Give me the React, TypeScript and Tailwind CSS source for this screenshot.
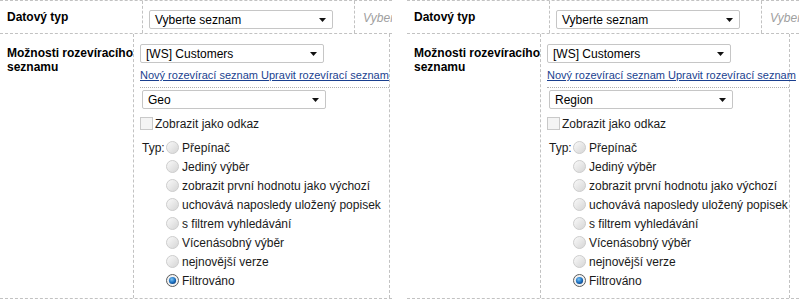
import React from "react";

const font = { fontFamily: '"Liberation Sans", Arial, sans-serif' };

const options = [
  "Přepínač",
  "Jediný výběr",
  "zobrazit první hodnotu jako výchozí",
  "uchovává naposledy uložený popisek",
  "s filtrem vyhledávání",
  "Vícenásobný výběr",
  "nejnovější verze",
  "Filtrováno",
];

function Select({ text, className = "" }: { text: string; className?: string }) {
  return (
    <div
      className={`flex h-[19px] w-[184px] items-center justify-between rounded-[2px] border border-[#c6c6c6] bg-white pl-[5px] pr-[5px] text-[12px] text-black ${className}`}
    >
      <span className="leading-none">{text}</span>
      <svg width="7" height="4" viewBox="0 0 7 4" className="mr-[1px]">
        <path d="M0 0h7L3.5 4z" fill="#111" />
      </svg>
    </div>
  );
}

function Radio({ checked }: { checked?: boolean }) {
  if (checked) {
    return (
      <svg width="13" height="13" viewBox="0 0 13 13" className="shrink-0">
        <defs>
          <radialGradient id="rb-on" cx="40%" cy="35%" r="70%">
            <stop offset="0%" stopColor="#7cc4f5" />
            <stop offset="60%" stopColor="#1f74c4" />
            <stop offset="100%" stopColor="#0b3f80" />
          </radialGradient>
        </defs>
        <circle cx="6.5" cy="6.5" r="6" fill="#f2f2f2" stroke="#5b5b5b" />
        <circle cx="6.5" cy="6.5" r="3.6" fill="url(#rb-on)" />
      </svg>
    );
  }
  return (
    <svg width="13" height="13" viewBox="0 0 13 13" className="shrink-0">
      <defs>
        <linearGradient id="rb-off" x1="0" y1="0" x2="1" y2="1">
          <stop offset="0%" stopColor="#fbfbfb" />
          <stop offset="100%" stopColor="#d4d4d4" />
        </linearGradient>
      </defs>
      <circle cx="6.5" cy="6.5" r="6" fill="url(#rb-off)" stroke="#cdcdcd" />
    </svg>
  );
}

function Panel({ value, narrow }: { value: string; narrow?: boolean }) {
  return (
    <div className="text-black">
      {/* row: data type */}
      <div className="flex h-[34px] border-y border-dashed border-[#c2c2c2]">
        <div className="flex w-[143px] shrink-0 items-center border-r border-dashed border-[#c2c2c2] pl-[7px] text-[12px] font-bold">
          Datový typ
        </div>
        <div className="w-[212px] shrink-0 border-r border-dashed border-[#c2c2c2] pl-[6px] pt-[9px]">
          <Select text="Vyberte seznam" />
        </div>
        <div className="flex min-w-0 flex-1 items-center overflow-hidden whitespace-nowrap pl-[8px] pt-[1px] text-[12px] italic text-[#a0a0a0]">
          Vyberte seznam
        </div>
      </div>

      {/* row: dropdown options */}
      <div className="flex h-[265px] border-b border-dashed border-[#c2c2c2]">
        <div className="w-[134px] shrink-0 whitespace-nowrap border-r border-dashed border-[#c2c2c2] pl-[7px] pt-[12px] text-[12px] font-bold leading-[14px]">
          Možnosti rozevíracího
          <br />
          seznamu
        </div>
        <div
          className={`${narrow ? "w-[249px]" : "w-[256px]"} shrink-0 border-r border-dashed border-[#c2c2c2] pl-[6px] pt-[10px]`}
        >
          <Select text="[WS] Customers" />
          <div className="mt-[5px] whitespace-nowrap text-[11px] leading-[14px] text-[#1a3f8f] underline">
            <a>Nový rozevírací seznam</a> <a>Upravit rozevírací seznam</a>
          </div>
          <div className="mt-[5px] border-t border-dotted border-[#b0b0b0]" />
          <Select text={value} className="ml-[2px] mt-[2px]" />
          <div className="mt-[8px] flex h-[13px] items-center text-[12px] text-[#1a1a1a]">
            <div className="h-[13px] w-[13px] border border-[#c9c9c9] bg-[#f4f4f4]" />
            <span className="ml-[2px]">Zobrazit jako odkaz</span>
          </div>
          <div className="mt-[8px] flex text-[12px] text-[#1a1a1a]">
            <div className="flex h-[19px] w-[26px] shrink-0 items-center pl-[2px]">Typ:</div>
            <div className="flex flex-col">
              {options.map((o, i) => (
                <div key={o} className="flex h-[19px] items-center whitespace-nowrap">
                  <Radio checked={i === options.length - 1} />
                  <span className="ml-[3px]">{o}</span>
                </div>
              ))}
            </div>
          </div>
        </div>
      </div>
    </div>
  );
}

export default function App() {
  return (
    <div className="flex h-[300px] w-[799px] overflow-hidden bg-white" style={font}>
      <div className="w-[392px] shrink-0 overflow-hidden">
        <Panel value="Geo" />
      </div>
      <div className="ml-[15px] min-w-0 flex-1 overflow-hidden">
        <Panel value="Region" narrow />
      </div>
    </div>
  );
}
